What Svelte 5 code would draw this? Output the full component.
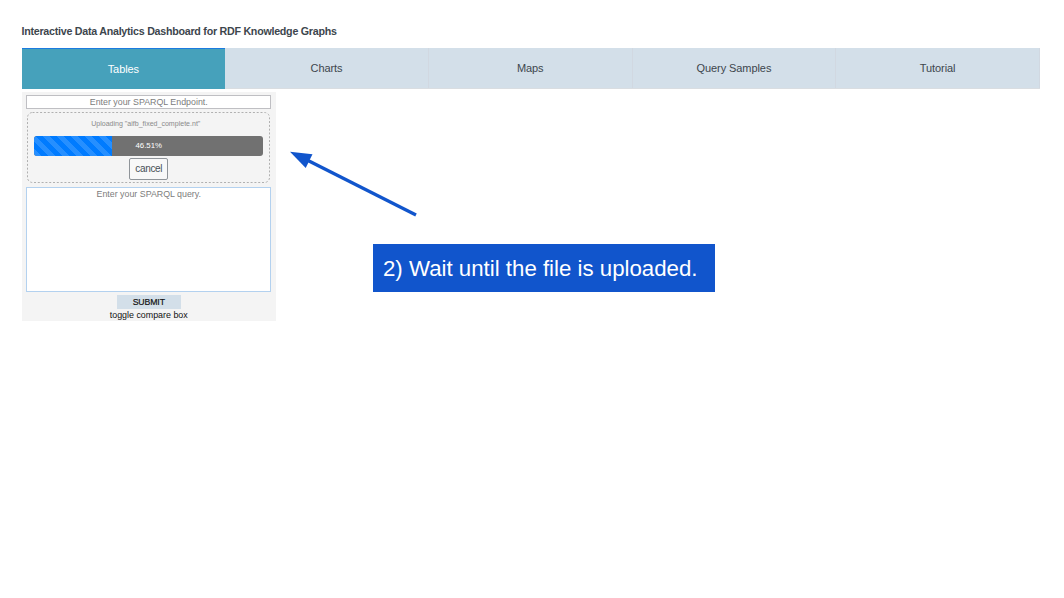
<script>
  const tabs = ['Tables', 'Charts', 'Maps', 'Query Samples', 'Tutorial'];
  const progress = 46.51;
  let active = $state(0);
</script>

<main>
  <h1>Interactive Data Analytics Dashboard for RDF Knowledge Graphs</h1>
  <nav>
    {#each tabs as tab, i}
      <button class="tab" class:active={active === i} onclick={() => (active = i)}>{tab}</button>
    {/each}
  </nav>
  <section class="panel">
    <input class="endpoint" placeholder="Enter your SPARQL Endpoint." />
    <div class="upload">
      <svg class="outline" width="243" height="71">
        <rect x="0.5" y="0.5" width="242" height="70" rx="5" fill="none" stroke="#b0b0b0" stroke-dasharray="2 1.8" />
      </svg>
      <div class="filename">Uploading "aifb_fixed_complete.nt"</div>
      <div class="bar">
        <div class="stripes"></div>
        <span>{progress}%</span>
      </div>
      <button class="cancel">cancel</button>
    </div>
    <textarea placeholder="Enter your SPARQL query."></textarea>
    <button class="submit">SUBMIT</button>
    <div class="toggle">toggle compare box</div>
  </section>
  <svg class="arrow" width="140" height="80" viewBox="0 0 140 80">
    <path d="M136 75L28 20.5" stroke="#1155cc" stroke-width="3.4" fill="none" />
    <path d="M10 11.7L32.5 14.3L25.7 28Z" fill="#1155cc" />
  </svg>
  <div class="callout">2) Wait until the file is uploaded.</div>
</main>

<style>
  :global(body) { background: #fff; }
  main {
    box-sizing: border-box;
    height: 598px;
    padding: 24px 24px 0 21.5px;
    overflow: hidden;
    font-family: "Liberation Sans", Arial, sans-serif;
    color: #3d464d;
  }
  button, input, textarea {
    box-sizing: border-box;
    display: block;
    margin: 0;
    padding: 0;
    border: 0;
    border-radius: 0;
    font-family: inherit;
  }
  h1 {
    margin: 0;
    height: 24px;
    font-size: 10.7px;
    line-height: 15px;
    letter-spacing: -0.26px;
    white-space: nowrap;
  }
  nav {
    box-sizing: border-box;
    display: grid;
    grid-template-columns: repeat(5, 1fr);
    height: 41px;
    border-bottom: 1px solid #d9dde1;
    background: #d3dfe9;
  }
  .tab {
    border-right: 1px solid #d1d8e1;
    background: #d3dfe9;
    color: #3d464d;
    font-size: 11px;
    letter-spacing: -0.08px;
  }
  .tab.active {
    border-top: 1px solid #1b7be0;
    border-right: 0;
    background: #46a1bb;
    color: #fff;
    margin-bottom: -1px;
    padding-bottom: 1px;
  }
  .panel {
    box-sizing: border-box;
    display: flex;
    flex-direction: column;
    align-items: center;
    width: 254.5px;
    height: 229px;
    margin-top: 3px;
    padding-top: 3px;
    background: #f4f4f4;
  }
  .panel > * { flex: none; }
  .endpoint {
    width: 245px;
    height: 14px;
    border: 1px solid #bfbfc3;
    background: #fff;
    text-align: center;
    font-size: 8.85px;
  }
  ::placeholder { color: #7c7c7c; opacity: 1; }
  .upload {
    position: relative;
    box-sizing: border-box;
    display: flex;
    flex-direction: column;
    align-items: center;
    width: 243px;
    height: 71px;
    margin-top: 3px;
    padding-top: 6px;
  }
  .outline { position: absolute; inset: 0; }
  .filename {
    height: 18px;
    margin-right: 6px;
    color: #8a8a8a;
    font-size: 7.05px;
    line-height: 11px;
  }
  .bar {
    position: relative;
    flex: none;
    width: 229px;
    height: 19.5px;
    border-radius: 3px;
    background: #717171;
    overflow: hidden;
  }
  .stripes {
    width: 34%;
    height: 100%;
    background: repeating-linear-gradient(45deg, #268fff 0 4.95px, #007bff 4.95px 9.9px);
  }
  .bar span {
    position: absolute;
    inset: 0;
    color: #fff;
    font-size: 7.8px;
    line-height: 20px;
    text-align: center;
  }
  .cancel {
    flex: none;
    width: 39px;
    height: 22px;
    margin-top: 2.5px;
    border: 1px solid #8f9499;
    border-radius: 2px;
    background: #f8f8f8;
    color: #495057;
    font-size: 10px;
    line-height: 19px;
    letter-spacing: -0.3px;
    padding-bottom: 1px;
  }
  textarea {
    width: 245px;
    height: 105px;
    margin-top: 4px;
    padding-top: 1px;
    border: 1px solid #b3d1ef;
    background: #fff;
    resize: none;
    text-align: center;
    font-size: 8.85px;
    line-height: 10px;
  }
  .submit {
    width: 64px;
    height: 14px;
    margin-top: 3px;
    background: #d3dfe9;
    color: #111;
    font-size: 8.7px;
    -webkit-text-stroke: 0.2px #111;
    letter-spacing: -0.1px;
  }
  .toggle {
    color: #111;
    font-size: 8.9px;
    line-height: 12px;
  }
  .arrow { position: absolute; left: 280px; top: 140px; }
  .callout {
    position: absolute;
    left: 373px;
    top: 244px;
    box-sizing: border-box;
    width: 342px;
    height: 48px;
    padding-left: 10px;
    background: #1155cc;
    color: #fff;
    font-size: 22.25px;
    line-height: 49px;
    white-space: nowrap;
  }
</style>
